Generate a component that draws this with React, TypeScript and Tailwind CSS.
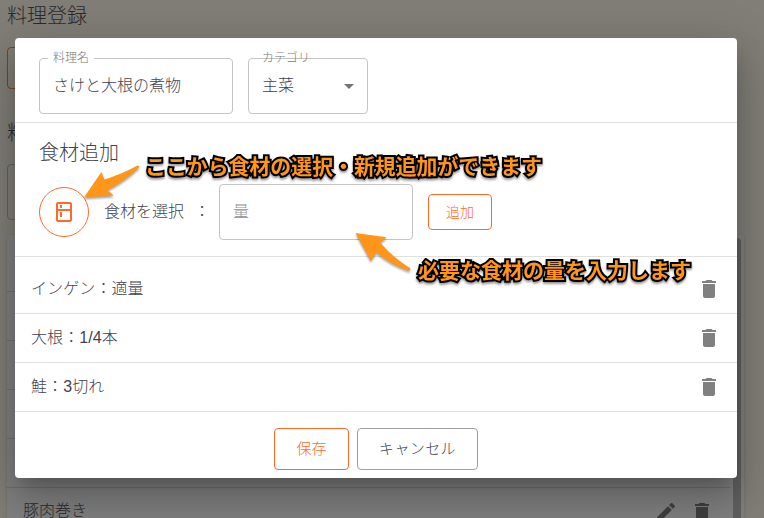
import React from "react";

const TRASH = "M6 19c0 1.1.9 2 2 2h8c1.1 0 2-.9 2-2V7H6v12zM19 4h-3.5l-1-1h-5l-1 1H5v2h14V4z";
const PENCIL =
  "M3 17.25V21h3.75L17.81 9.94l-3.75-3.75L3 17.25zM20.71 7.04c.39-.39.39-1.02 0-1.41l-2.34-2.34c-.39-.39-1.02-.39-1.41 0l-1.83 1.83 3.75 3.75 1.83-1.83z";
const KITCHEN =
  "M18 2.01L6 2c-1.1 0-2 .89-2 2v16c0 1.1.9 2 2 2h12c1.1 0 2-.9 2-2V4c0-1.1-.9-1.99-2-1.99zM18 20H6v-9.02h12V20zm0-11H6V4h12v5zM8 5h2v3H8V5zm0 7h2v5H8v-5z";

function Icon({ d, className = "" }: { d: string; className?: string }) {
  return (
    <svg viewBox="0 0 24 24" className={`size-6 shrink-0 fill-current ${className}`}>
      <path d={d} />
    </svg>
  );
}

function PageBehind() {
  return (
    <div className="flex h-full flex-col pl-[7px] text-[#2a2a2e]">
      <h1 className="mt-1 h-6 text-xl leading-6">料理登録</h1>
      <div className="mt-[19px] h-[42px] w-24 rounded border border-[#8f3d1b]" />
      <h2 className="mt-8 h-6 text-xl leading-6">料理一覧</h2>
      <div className="mt-[19px] h-14 w-48 shrink-0 rounded border border-[#64635f]" />
      <div className="mt-[15px] flex h-[283px] w-[737px] shrink-0 justify-between rounded-t bg-[#808080] shadow-[0_1px_3px_rgba(0,0,0,0.15)]">
        <div className="w-[723px]">
          <div className="h-[57px] border-b border-[#707070]" />
          <div className="h-[49px] border-b border-[#707070]" />
          <div className="h-[49px] border-b border-[#707070]" />
          <div className="h-[49px] border-b border-[#707070]" />
          <div className="h-[49px] border-b border-[#707070]" />
          <div className="flex h-[30px] items-start pl-4 pr-4 text-base">
            <span className="mt-[15px] flex-1 leading-4">豚肉巻き</span>
            <Icon d={PENCIL} className="mr-3 mt-3 text-[#404040]" />
            <Icon d={TRASH} className="mt-3 text-[#404040]" />
          </div>
        </div>
        <div className="mr-[3px] mt-[3px] w-2 rounded-t bg-[#606060]" />
      </div>
    </div>
  );
}

function Ingredient({ label, className }: { label: string; className: string }) {
  return (
    <li className={`flex items-center justify-between border-b border-[#e0e0e0] pl-4 pr-4 ${className}`}>
      <span className="tracking-[0.1px]">{label}</span>
      <Icon d={TRASH} className="text-[#808080]" />
    </li>
  );
}

function Dialog() {
  return (
    <div className="flex h-[440px] w-[722px] flex-col rounded bg-white text-base text-[#43434f] shadow-[0_11px_15px_-7px_rgba(0,0,0,0.2),0_24px_38px_3px_rgba(0,0,0,0.14),0_9px_46px_8px_rgba(0,0,0,0.12)]">
      <div className="flex h-[85px] gap-[15px] border-b border-[#e0e0e0] pl-6 pt-5">
        <div className="relative flex h-14 w-[194px] items-center rounded border border-[#c4c4c4] pl-[13px]">
          <span className="absolute -top-[9px] left-2 bg-white px-[5px] text-xs leading-4 text-[#777]">料理名</span>
          <span className="-mt-px">さけと大根の煮物</span>
        </div>
        <div className="relative flex h-14 w-[120px] items-center justify-between rounded border border-[#c4c4c4] pl-[13px] pr-[13px]">
          <span className="absolute -top-[9px] left-[13px] text-xs leading-4 text-[#777]">カテゴリ</span>
          <span className="-mt-px">主菜</span>
          <svg viewBox="0 0 10 5" className="h-[5px] w-[10px] fill-[#757575]">
            <path d="M0 0h10L5 5z" />
          </svg>
        </div>
      </div>
      <div className="flex h-[134px] flex-col border-b border-[#e0e0e0] pl-6">
        <h2 className="mt-[18px] h-6 text-xl leading-6">食材追加</h2>
        <div className="mt-[19px] flex h-14 items-center">
          <div className="flex size-[50px] items-center justify-center rounded-full border border-[#ff6a2b] text-[#ff6a2b]">
            <Icon d={KITCHEN} />
          </div>
          <span className="ml-[15px] flex w-[115px]">
            食材を選択<span className="ml-[10px]">：</span>
          </span>
          <div className="flex h-14 w-[194px] items-center rounded border border-[#c4c4c4] pl-[13px] text-[#909090]">量</div>
          <div className="ml-[15px] flex h-9 w-16 items-center justify-center rounded border border-[#ff6a2b] text-sm text-[#ff6a2b]">
            追加
          </div>
        </div>
      </div>
      <ul>
        <Ingredient label="インゲン：適量" className="h-[57px] pt-2" />
        <Ingredient label="大根：1/4本" className="h-[49px]" />
        <Ingredient label="鮭：3切れ" className="h-[49px]" />
      </ul>
      <div className="mt-4 flex justify-center gap-2 text-[15px]">
        <div className="flex h-[42px] w-[75px] items-center justify-center rounded border border-[#ff6a2b] text-[#ff6a2b]">保存</div>
        <div className="flex h-[42px] w-[121px] items-center justify-center rounded border border-[#a0a0a4] tracking-[0.4px]">キャンセル</div>
      </div>
    </div>
  );
}

const noteClass =
  "absolute whitespace-nowrap font-bold leading-6 text-[#ff9519] [paint-order:stroke_fill] [-webkit-text-stroke:4px_#000] [filter:drop-shadow(0_2px_1px_rgba(0,0,0,0.4))]";

export default function App() {
  return (
    <div className="relative h-[518px] w-[764px] overflow-hidden bg-[#807e77] font-light [font-family:'Liberation_Sans','Noto_Sans_CJK_JP',sans-serif]">
      <PageBehind />
      <div className="absolute left-[15px] top-[38px]">
        <Dialog />
      </div>
      <svg
        viewBox="0 0 764 518"
        className="absolute inset-0 h-full w-full fill-[#ff9519] [filter:drop-shadow(0_2px_1px_rgba(0,0,0,0.35))]"
      >
        <path d="M84 197.500 L101.500 172 L104.300 179.500 Q122 174 137.500 165.500 Q140 165.500 138.500 168 Q125 181 107.500 190 L113.800 195.500 Z" />
        <path d="M355.500 233 L386.500 237.200 L380.300 242.700 Q393 257.500 410 268 Q411 270.800 408.500 270.700 Q389 263.500 376.500 252.500 L370.700 261 Z" />
      </svg>
      <p className={`${noteClass} left-[145px] top-[155px] text-[20.9px]`}>ここから食材の選択・新規追加ができます</p>
      <p className={`${noteClass} left-[418px] top-[259px] text-[21px]`}>必要な食材の量を入力します</p>
    </div>
  );
}
